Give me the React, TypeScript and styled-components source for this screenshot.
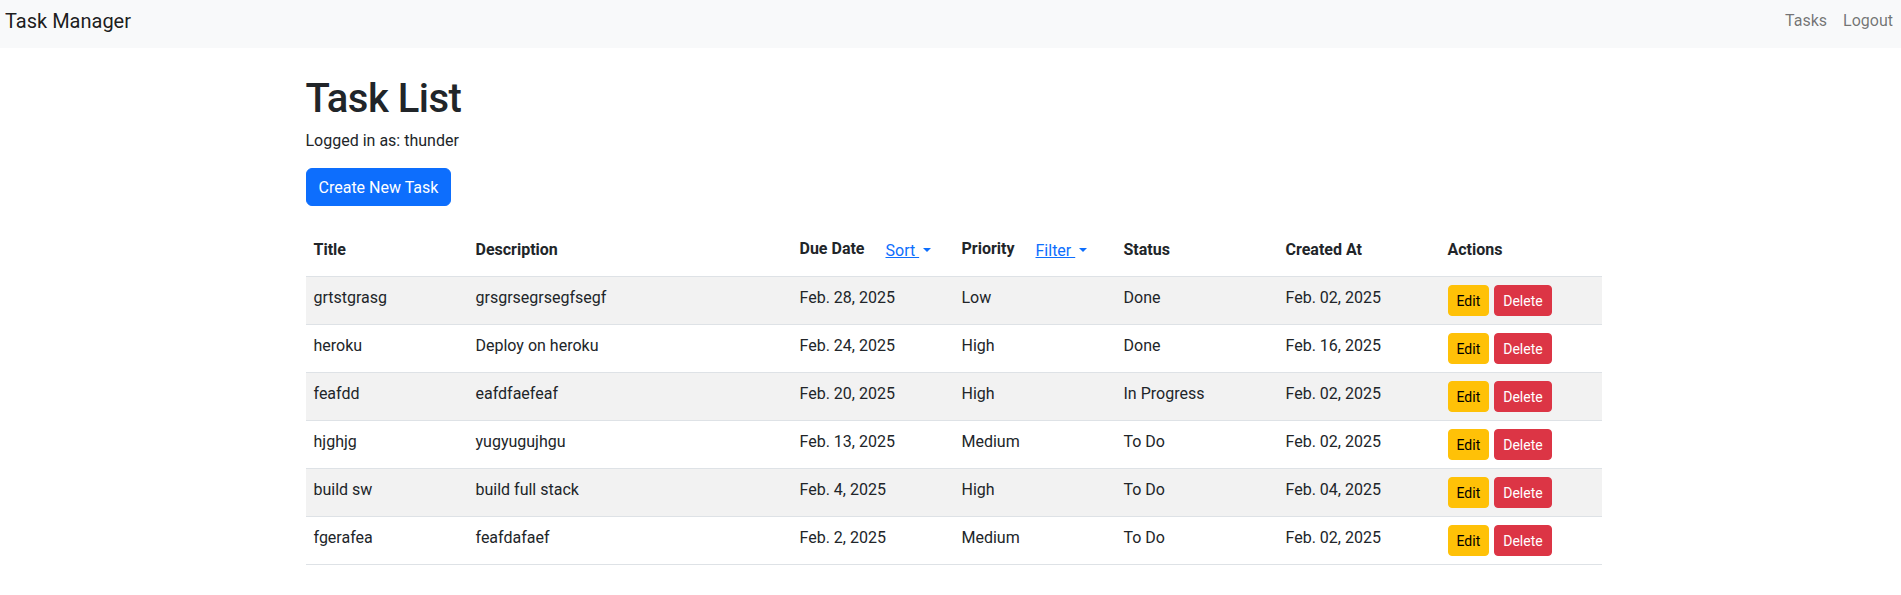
import React from "react";
import styled, { createGlobalStyle } from "styled-components";

const FONT = `Roboto, "Liberation Sans", sans-serif`;

const Global = createGlobalStyle`
  html, body { margin: 0; padding: 0; background: #fff; }
  body {
    font-family: ${FONT};
    font-size: 16px;
    line-height: 1.5;
    color: #212529;
  }
  * { box-sizing: border-box; }
`;

const Navbar = styled.nav`
  height: 48px;
  background: #f8f9fa;
  display: flex;
  align-items: flex-start;
  justify-content: space-between;
  padding: 0 0 0 5px;
`;

const Brand = styled.a`
  font-size: 20px;
  line-height: 30px;
  padding-top: 6px;
  color: rgba(0, 0, 0, 0.9);
  text-decoration: none;
`;

const NavLinks = styled.div`
  display: flex;
`;

const NavLink = styled.a`
  padding: 9px 8px 7px;
  line-height: 24px;
  color: rgba(0, 0, 0, 0.55);
  text-decoration: none;
`;

const Container = styled.main`
  max-width: 1320px;
  margin: 0 auto;
  padding: 0 9px 0 15px;
`;

const Heading = styled.h1`
  margin: 27px 0 5px;
  font-size: 40px;
  line-height: 48px;
  font-weight: 500;
  letter-spacing: -0.5px;
`;

const Lead = styled.p`
  margin: 0 0 16px;
  padding-top: 1px;
  line-height: 23px;
`;

const Button = styled.button<{ $variant: "primary" | "warning" | "danger"; $small?: boolean }>`
  display: inline-block;
  font-family: ${FONT};
  font-size: ${(p) => (p.$small ? "14px" : "16px")};
  line-height: ${(p) => (p.$small ? "21px" : "24px")};
  padding: ${(p) => (p.$small ? "5px 8px 3px" : "7px 12px 5px")};
  border-radius: ${(p) => (p.$small ? "4px" : "6px")};
  border: 1px solid
    ${(p) => (p.$variant === "primary" ? "#0d6efd" : p.$variant === "warning" ? "#ffc107" : "#dc3545")};
  background: ${(p) => (p.$variant === "primary" ? "#0d6efd" : p.$variant === "warning" ? "#ffc107" : "#dc3545")};
  color: ${(p) => (p.$variant === "warning" ? "#000" : "#fff")};
  cursor: pointer;
  vertical-align: middle;
`;

const Table = styled.table`
  width: 100%;
  margin-top: 16px;
  border-collapse: collapse;
  table-layout: fixed;
`;

const Th = styled.th<{ $w: number }>`
  width: ${(p) => p.$w}px;
  text-align: left;
  font-weight: 700;
  padding: 9px 8px 7px;
  line-height: 24px;
  vertical-align: middle;
  border-bottom: 1px solid #dee2e6;
  white-space: nowrap;
`;

const Tr = styled.tr<{ $striped: boolean }>`
  background: ${(p) => (p.$striped ? "#f2f2f2" : "transparent")};
`;

const Td = styled.td`
  padding: 9px 8px 7px;
  line-height: 24px;
  vertical-align: top;
  border-bottom: 1px solid #dee2e6;
`;

const Actions = styled.div`
  display: flex;
  gap: 5px;
  margin: -1px 0 1px;
`;

const DropToggle = styled.button`
  display: inline-block;
  vertical-align: middle;
  font-family: ${FONT};
  font-size: 16px;
  line-height: 24px;
  padding: 7px 12px 5px;
  border: 1px solid transparent;
  background: transparent;
  color: #0d6efd;
  text-decoration: underline;
  white-space: pre;
  cursor: pointer;
  margin-left: 8px;
`;

const Caret = styled.span`
  display: inline-block;
  margin-left: 4px;
  vertical-align: 4px;
  border-top: 4px solid #0d6efd;
  border-left: 4px solid transparent;
  border-right: 4px solid transparent;
`;

type Task = {
  title: string;
  desc: string;
  due: string;
  priority: string;
  status: string;
  created: string;
};

const tasks: Task[] = [
  { title: "grtstgrasg", desc: "grsgrsegrsegfsegf", due: "Feb. 28, 2025", priority: "Low", status: "Done", created: "Feb. 02, 2025" },
  { title: "heroku", desc: "Deploy on heroku", due: "Feb. 24, 2025", priority: "High", status: "Done", created: "Feb. 16, 2025" },
  { title: "feafdd", desc: "eafdfaefeaf", due: "Feb. 20, 2025", priority: "High", status: "In Progress", created: "Feb. 02, 2025" },
  { title: "hjghjg", desc: "yugyugujhgu", due: "Feb. 13, 2025", priority: "Medium", status: "To Do", created: "Feb. 02, 2025" },
  { title: "build sw", desc: "build full stack", due: "Feb. 4, 2025", priority: "High", status: "To Do", created: "Feb. 04, 2025" },
  { title: "fgerafea", desc: "feafdafaef", due: "Feb. 2, 2025", priority: "Medium", status: "To Do", created: "Feb. 02, 2025" },
];

export default function App() {
  return (
    <>
      <Global />
      <Navbar>
        <Brand href="#">Task Manager</Brand>
        <NavLinks>
          <NavLink href="#">Tasks</NavLink>
          <NavLink href="#">Logout</NavLink>
        </NavLinks>
      </Navbar>
      <Container>
        <Heading>Task List</Heading>
        <Lead>Logged in as: thunder</Lead>
        <Button $variant="primary">Create New Task</Button>
        <Table>
          <thead>
            <tr>
              <Th $w={162}>Title</Th>
              <Th $w={324}>Description</Th>
              <Th $w={162}>
                Due Date
                <DropToggle>
                  {"Sort "}
                  <Caret />
                </DropToggle>
              </Th>
              <Th $w={162}>
                Priority
                <DropToggle>
                  {"Filter "}
                  <Caret />
                </DropToggle>
              </Th>
              <Th $w={162}>Status</Th>
              <Th $w={162}>Created At</Th>
              <Th $w={162}>Actions</Th>
            </tr>
          </thead>
          <tbody>
            {tasks.map((t, i) => (
              <Tr key={i} $striped={i % 2 === 0}>
                <Td>{t.title}</Td>
                <Td>{t.desc}</Td>
                <Td>{t.due}</Td>
                <Td>{t.priority}</Td>
                <Td>{t.status}</Td>
                <Td>{t.created}</Td>
                <Td>
                  <Actions>
                    <Button $variant="warning" $small>Edit</Button>
                    <Button $variant="danger" $small>Delete</Button>
                  </Actions>
                </Td>
              </Tr>
            ))}
          </tbody>
        </Table>
      </Container>
    </>
  );
}
